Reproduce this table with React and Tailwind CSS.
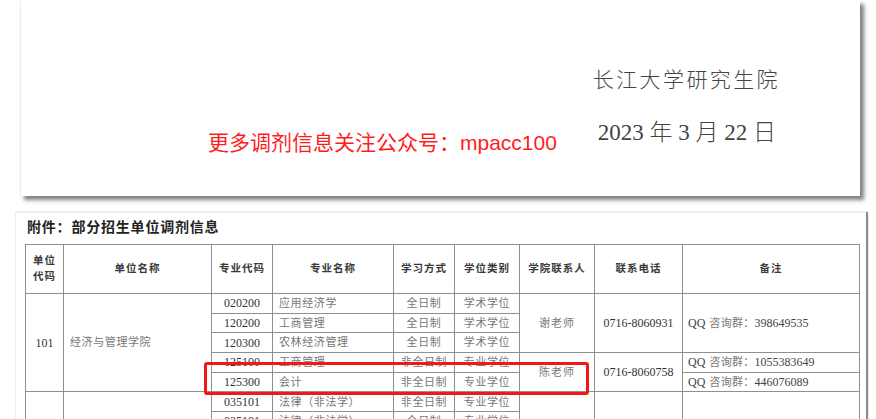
const serif = "font-['Liberation_Serif','Noto_Sans_CJK_SC',serif]"

function Cell({ className = '', children }) {
  return (
    <div className={`border-r border-b border-[#8f8f8f] flex items-center overflow-hidden whitespace-nowrap ${className}`}>
      {children}
    </div>
  )
}

function Head({ className = '', children }) {
  return (
    <Cell className={`justify-center text-center font-bold text-[10.5px] tracking-[1px] text-[#3a3a3a] leading-[16.5px] ${className}`}>
      {children}
    </Cell>
  )
}

const rows = [
  ['020200', '应用经济学', '全日制', '学术学位'],
  ['120200', '工商管理', '全日制', '学术学位'],
  ['120300', '农林经济管理', '全日制', '学术学位'],
  ['125100', '工商管理', '非全日制', '专业学位'],
  ['125300', '会计', '非全日制', '专业学位'],
  ['035101', '法律（非法学）', '非全日制', '专业学位'],
  ['035101', '法律（非法学）', '全日制', '专业学位'],
]

const rowStart = ['row-start-2', 'row-start-3', 'row-start-4', 'row-start-5', 'row-start-6', 'row-start-7', 'row-start-8']

export default function App() {
  return (
    <div className={`relative w-[876px] h-[419px] overflow-hidden bg-white ${serif}`}>
      {/* first page, bottom part */}
      <div className="ml-[20px] w-[840px] h-[196px] bg-white border-l border-[#ececec] shadow-[4px_4px_4px_rgba(0,0,0,0.5)] flex flex-col pt-[66px]">
        <div className="flex justify-end pr-[80px] text-[21px] leading-[28px] tracking-[2.4px] text-[#444] font-light">
          长江大学研究生院
        </div>
        <div className="flex mt-[25px] pl-[187px] pr-[84px]">
          <div className="mt-[10px] text-[21px] leading-[28px] text-[#ff1c1c] font-['Liberation_Sans','Noto_Sans_CJK_SC',sans-serif]">
            更多调剂信息关注公众号：mpacc100
          </div>
          <div className="ml-auto text-[23px] leading-[28px] text-[#444] font-light">
            2023 年 3 月 22 日
          </div>
        </div>
      </div>

      {/* second page */}
      <div className="mt-[16px] ml-[15px] w-[851px] h-[220px] bg-white border-l border-t border-[#ececec] shadow-[2px_0_1px_rgba(0,0,0,0.45)] pt-[5px]">
        <div className="pl-[11px] text-[14px] leading-[20px] font-bold tracking-[0.8px] text-[#222]">
          附件：部分招生单位调剂信息
        </div>
        <div className="mt-[6px] ml-[9px] w-[835px] grid grid-cols-[38px_148px_61px_121px_61px_65px_75px_88px_177px] grid-rows-[49px_repeat(7,19.7px)] border-l border-t border-[#8f8f8f]">
          <Head className="col-start-1 row-start-1 flex-col">
            <span>单位</span>
            <span>代码</span>
          </Head>
          <Head className="col-start-2 row-start-1">单位名称</Head>
          <Head className="col-start-3 row-start-1">专业代码</Head>
          <Head className="col-start-4 row-start-1">专业名称</Head>
          <Head className="col-start-5 row-start-1">学习方式</Head>
          <Head className="col-start-6 row-start-1">学位类别</Head>
          <Head className="col-start-7 row-start-1">学院联系人</Head>
          <Head className="col-start-8 row-start-1">联系电话</Head>
          <Head className="col-start-9 row-start-1">备注</Head>

          <Cell className="col-start-1 row-start-2 row-span-5 justify-center text-[12px] text-[#333]">101</Cell>
          <Cell className="col-start-2 row-start-2 row-span-5 pl-[6px] text-[11px] tracking-[0.6px] text-[#777]">经济与管理学院</Cell>
          <Cell className="col-start-1 row-start-7 row-span-2" />
          <Cell className="col-start-2 row-start-7 row-span-2" />

          {rows.map((r, i) => (
            <div key={i} className="contents">
              <Cell className={`col-start-3 ${rowStart[i]} justify-center text-[12px] text-[#333]`}>{r[0]}</Cell>
              <Cell className={`col-start-4 ${rowStart[i]} pl-[6px] text-[11px] tracking-[0.6px] text-[#777]`}>{r[1]}</Cell>
              <Cell className={`col-start-5 ${rowStart[i]} justify-center text-[11px] tracking-[0.6px] text-[#777]`}>{r[2]}</Cell>
              <Cell className={`col-start-6 ${rowStart[i]} justify-center text-[11px] tracking-[0.6px] text-[#777]`}>{r[3]}</Cell>
            </div>
          ))}

          <Cell className="col-start-7 row-start-2 row-span-3 justify-center text-[11px] tracking-[1px] text-[#777]">谢老师</Cell>
          <Cell className="col-start-7 row-start-5 row-span-2 justify-center text-[11px] tracking-[1px] text-[#777]">陈老师</Cell>
          <Cell className="col-start-7 row-start-7 row-span-2" />

          <Cell className="col-start-8 row-start-2 row-span-3 justify-center text-[12px] text-[#333]">0716-8060931</Cell>
          <Cell className="col-start-8 row-start-5 row-span-2 justify-center text-[12px] text-[#333]">0716-8060758</Cell>
          <Cell className="col-start-8 row-start-7 row-span-2" />

          <Cell className="col-start-9 row-start-2 row-span-3 pl-[5px] text-[12px] text-[#444]">
            QQ<span className="ml-[4px] text-[11px] tracking-[0.3px] text-[#777]">咨询群：</span>398649535
          </Cell>
          <Cell className="col-start-9 row-start-5 pl-[5px] text-[12px] text-[#444]">
            QQ<span className="ml-[4px] text-[11px] tracking-[0.3px] text-[#777]">咨询群：</span>1055383649
          </Cell>
          <Cell className="col-start-9 row-start-6 pl-[5px] text-[12px] text-[#444]">
            QQ<span className="ml-[4px] text-[11px] tracking-[0.3px] text-[#777]">咨询群：</span>446076089
          </Cell>
          <Cell className="col-start-9 row-start-7 row-span-2" />
        </div>
      </div>

      {/* red highlight annotation */}
      <div className="absolute left-[204px] top-[362px] w-[385px] h-[33px] border-[3px] border-[#f21818] rounded-[3px]" />
    </div>
  )
}
